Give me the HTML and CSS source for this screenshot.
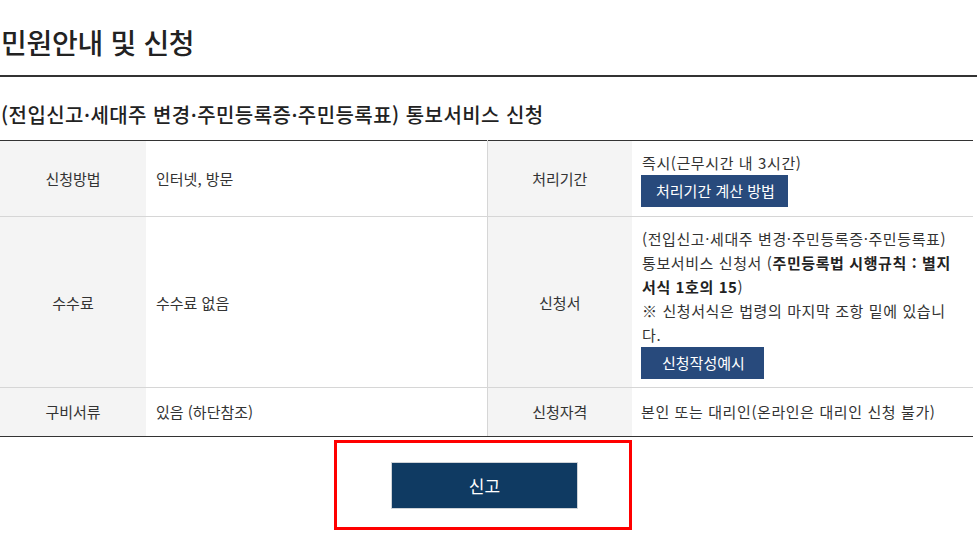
FILE: index.html
```html
<!DOCTYPE html>
<html lang="ko">
<head>
<meta charset="utf-8">
<title>민원안내 및 신청</title>
<link rel="stylesheet" href="styles.css">
</head>
<body>
<div class="page-head">
  <h1 class="page-title">민원안내 및 신청</h1>
</div>
<div class="content">
  <h2 class="svc-title">(전입신고·세대주 변경·주민등록증·주민등록표) 통보서비스 신청</h2>
  <table class="info-table">
    <colgroup>
      <col class="c-th1">
      <col class="c-td1">
      <col class="c-th2">
      <col class="c-td2">
    </colgroup>
    <tbody>
      <tr>
        <th>신청방법</th>
        <td class="sep">인터넷, 방문</td>
        <th>처리기간</th>
        <td class="wide">
          <div class="stack">
            <span>즉시(근무시간 내 3시간)</span>
            <a class="btn-sm btn-calc" href="#">처리기간 계산 방법</a>
          </div>
        </td>
      </tr>
      <tr class="row-tall">
        <th>수수료</th>
        <td class="sep">수수료 없음</td>
        <th>신청서</th>
        <td class="wide">
          <div class="stack">
            <span>(전입신고·세대주 변경·주민등록증·주민등록표) 통보서비스 신청서 (<strong>주민등록법 시행규칙 : 별지 서식 1호의 15</strong>)<br>※ 신청서식은 법령의 마지막 조항 밑에 있습니다.</span>
            <a class="btn-sm btn-example" href="#">신청작성예시</a>
          </div>
        </td>
      </tr>
      <tr class="row-short">
        <th>구비서류</th>
        <td class="sep">있음 (하단참조)</td>
        <th>신청자격</th>
        <td class="wide">본인 또는 대리인(온라인은 대리인 신청 불가)</td>
      </tr>
    </tbody>
  </table>
  <div class="action-box">
    <a class="btn-report" href="#">신고</a>
  </div>
</div>
</body>
</html>
```

FILE: styles.css
```css
* { box-sizing: border-box; }
html, body { margin: 0; padding: 0; background: #fff; }
body {
  font-family: "Noto Sans CJK KR", "Noto Sans", sans-serif;
  color: #333;
  font-size: 15px;
}
.page-head {
  border-bottom: 2px solid #333;
  padding: 22px 0 13px 0;
}
.page-title {
  margin: 0;
  font-size: 28px;
  line-height: 40px;
  font-weight: 500;
  letter-spacing: -0.3px;
  color: #222;
  padding-left: 1px;
}
.content { width: 973px; }
.svc-title {
  margin: 24px 0 11px 0;
  font-size: 20px;
  line-height: 28px;
  font-weight: 500;
  letter-spacing: 0.45px;
  color: #222;
  padding-left: 1px;
}
.info-table {
  width: 973px;
  table-layout: fixed;
  border-collapse: collapse;
  border-top: 1px solid #333;
  border-bottom: 1px solid #333;
}
.c-th1 { width: 146px; }
.c-td1 { width: 341px; }
.c-th2 { width: 145px; }
.c-td2 { width: 341px; }
.info-table th,
.info-table td {
  padding: 10px 10px 9px 10px;
  line-height: 24px;
  font-size: 15px;
  letter-spacing: 0.6px;
  vertical-align: middle;
  border-bottom: 1px solid #d6d6d6;
  text-align: left;
  color: #333;
}
.info-table td.wide { padding-left: 9px; padding-right: 14px; }
.info-table th {
  background: #f4f4f4;
  font-weight: 400;
  text-align: center;
  letter-spacing: 0;
}
.info-table td.sep { border-right: 1px solid #d6d6d6; letter-spacing: 0; }
.info-table tr:last-child th,
.info-table tr:last-child td { border-bottom: 1px solid #333; }
.info-table .row-tall th,
.info-table .row-tall td { padding-bottom: 8px; }
.info-table .row-short th,
.info-table .row-short td { padding-top: 12px; padding-bottom: 12px; }
.info-table strong { font-weight: 700; color: #222; }
.stack {
  display: flex;
  flex-direction: column;
  align-items: flex-start;
}
.stack > span { padding-left: 1px; }
.btn-sm {
  display: block;
  height: 32px;
  line-height: 32px;
  background: #284a7c;
  color: #fff;
  text-decoration: none;
  font-size: 15px;
  letter-spacing: 0;
}
.btn-calc { padding: 0 13px 0 15px; }
.btn-example { padding: 0 19px 0 21px; }
.action-box {
  width: 298px;
  margin: 3px 0 0 334px;
  border: 3px solid #ff0000;
  padding: 19px 0 18px 0;
  display: flex;
  justify-content: center;
}
.btn-report {
  display: block;
  width: 187px;
  height: 47px;
  line-height: 45px;
  text-align: center;
  background: #0f3a62;
  border: 1px solid #cfd3d8;
  color: #fff;
  font-size: 17px;
  text-decoration: none;
  margin-left: 3px;
}
```
